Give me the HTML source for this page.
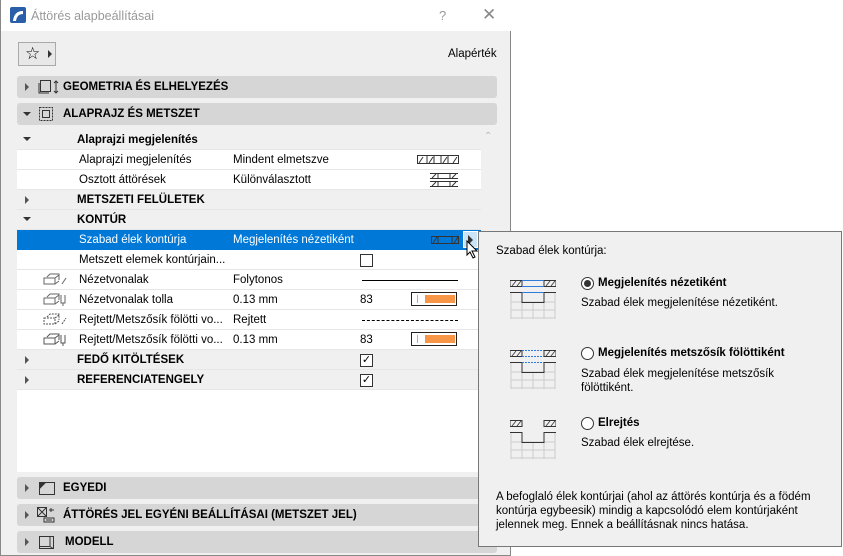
<!DOCTYPE html>
<html><head><meta charset="utf-8"><style>
*{box-sizing:border-box;margin:0;padding:0}
body{width:843px;height:556px;background:#fff;font-family:"Liberation Sans",sans-serif;font-size:11.5px;color:#000;position:relative;overflow:hidden}
.dlg{position:absolute;left:0;top:0;width:511px;height:556px;background:#f0f0f0;border:1px solid #888;border-top:none}
.title{position:absolute;left:0;top:0;width:510px;height:31px;background:#fff}
.abs{position:absolute}
.sh{position:absolute;left:16px;width:480px;height:22px;background:#d6d6d6;border-radius:3px;font-weight:bold;font-size:11.5px}
.sh span{position:absolute;top:5px}
.tri{position:absolute;width:0;height:0}
.tr{border-top:4px solid transparent;border-bottom:4px solid transparent;border-left:4px solid #555}
.td{border-left:4px solid transparent;border-right:4px solid transparent;border-top:4px solid #333}
.row{position:absolute;left:16px;width:464px;height:20px;border-bottom:1px solid #e6e6e6;background:#fff}
.row.g{background:#f0f0f0;font-weight:bold}
.row span{position:absolute;top:4px}
.cb{position:absolute;width:13px;height:13px;border:1px solid #333;background:#fff}
.pen{position:absolute;left:410px;top:2px;width:46px;height:14px;border:1px solid #222;background:#fff}
.pen i{position:absolute;left:5px;top:2px;width:1px;height:8px;background:#f5a050}
.pen b{position:absolute;left:13px;top:2px;width:30px;height:8px;background:#f79646}
.pop{position:absolute;left:478px;top:231px;width:364px;height:316px;background:#f0f0f0;border:1px solid #777}
.radio{position:absolute;width:13px;height:13px;border:1px solid #333;border-radius:50%;background:#fff}
</style></head><body>
<div class="dlg">
<div class="title">
<svg class="abs" style="left:9px;top:7px" width="16" height="16"><rect width="16" height="16" rx="2" fill="#2a5ea8"/><path d="M3 14 Q4 4 13 4 L13 7 Q7 7 6 14Z" fill="#fff"/></svg>
<span class="abs" style="left:30px;top:9px;color:#999;font-size:12.5px">Áttörés alapbeállításai</span>
<span class="abs" style="left:438px;top:8px;color:#999;font-size:13px">?</span>
<span class="abs" style="left:481px;top:5px;color:#888;font-size:17px">✕</span>
</div>
<div class="abs" style="left:17px;top:42px;width:38px;height:24px;border:1px solid #aaa;background:#e8e8e8"></div>
<span class="abs" style="left:24px;top:44px;font-size:17px">☆</span>
<div class="tri tr abs" style="left:47px;top:50px;border-left-color:#333"></div>
<span class="abs" style="left:447px;top:48px">Alapérték</span>

<div class="sh" style="top:76px"><div class="tri tr" style="left:8px;top:7px"></div>
<svg class="abs" style="left:21px;top:3px" width="22" height="16" fill="none" stroke="#333"><rect x="2.5" y="1.5" width="10" height="11"/><path d="M1 4v10h10M18 2v12M16 4l2-2 2 2M16 12l2 2 2-2"/></svg>
<span style="left:46px">GEOMETRIA ÉS ELHELYEZÉS</span></div>
<div class="sh" style="top:103px"><div class="tri td" style="left:6px;top:9px"></div>
<svg class="abs" style="left:21px;top:3px" width="16" height="16" fill="none" stroke="#333"><rect x="1.5" y="1.5" width="13" height="13" stroke-dasharray="2 1"/><rect x="4.5" y="4.5" width="7" height="7"/></svg>
<span style="left:46px">ALAPRAJZ ÉS METSZET</span></div>

<div class="abs" style="left:16px;top:130px;width:480px;height:342px;background:#fff"></div>
<div class="abs" style="left:480px;top:130px;width:16px;height:342px;background:#f0f0f0"></div>
<span class="abs" style="left:483px;top:131px;color:#bbb;font-size:10px">⌃</span>

<div class="row g" style="top:130px"><div class="tri td" style="left:6px;top:7px"></div><span style="left:60px">Alaprajzi megjelenítés</span></div>
<div class="row" style="top:150px"><span style="left:62px">Alaprajzi megjelenítés</span><span style="left:216px">Mindent elmetszve</span>
<svg class="abs" style="left:400px;top:5px" width="42" height="10" fill="none" stroke="#333"><rect x="0.5" y="0.5" width="41" height="8"/><path d="M10 1v8M17 1v8M24 1v8M31 1v8M2 8l4-6M12 8l4-6M26 8l4-6M36 8l4-6"/></svg></div>
<div class="row" style="top:170px"><span style="left:62px">Osztott áttörések</span><span style="left:216px">Különválasztott</span>
<svg class="abs" style="left:413px;top:3px" width="28" height="14" fill="none" stroke="#333"><path d="M0 .5h28M0 5.5h28M0 8.5h28M0 13.5h28M2 5l4-4M22 5l4-4M2 13l4-4M22 13l4-4M8 1v4M20 1v4M8 9v4M20 9v4"/></svg></div>
<div class="row g" style="top:190px"><div class="tri tr" style="left:8px;top:6px"></div><span style="left:60px">METSZETI FELÜLETEK</span></div>
<div class="row g" style="top:210px"><div class="tri td" style="left:6px;top:7px"></div><span style="left:60px">KONTÚR</span></div>
<div class="row" style="top:230px;background:#0078d7;color:#fff;border:none;width:464px"><span style="left:62px">Szabad élek kontúrja</span><span style="left:216px">Megjelenítés nézetiként</span>
<svg class="abs" style="left:414px;top:6px" width="28" height="8" fill="none" stroke="#333"><rect x="0.5" y="0.5" width="27" height="7"/><path d="M7 0v8M21 0v8M2 7l4-6M23 7l4-6"/></svg>
<div class="abs" style="left:446px;top:1px;width:15px;height:17px;border:1px solid #fff;background:#cce4f7"></div>
<div class="tri tr abs" style="left:451px;top:5px;border-left-color:#333;border-top-width:5px;border-bottom-width:5px;border-left-width:5px"></div></div>
<div class="row" style="top:250px"><span style="left:62px">Metszett elemek kontúrjain...</span><div class="cb" style="left:343px;top:4px"></div></div>
<div class="row" style="top:270px"><svg class="abs" style="left:26px;top:2px" width="24" height="16" fill="none" stroke="#666"><path d="M4 5l3-3h9v6M1 6h11v6H1zM12 6l4-3M12 12l4-3M19 12l4-6" /></svg><span style="left:62px">Nézetvonalak</span><span style="left:216px">Folytonos</span><div class="abs" style="left:345px;top:10px;width:96px;height:1px;background:#000"></div></div>
<div class="row" style="top:290px"><svg class="abs" style="left:26px;top:2px" width="24" height="16" fill="none" stroke="#666"><path d="M4 5l3-3h9v6M1 6h11v6H1zM12 6l4-3M12 12l4-3M18 3v8h4V3M20 11v3"/></svg><span style="left:62px">Nézetvonalak tolla</span><span style="left:216px">0.13 mm</span><span style="left:343px">83</span><div class="pen" style="left:394px"><i></i><b></b></div></div>
<div class="row" style="top:310px"><svg class="abs" style="left:26px;top:2px" width="24" height="16" fill="none" stroke="#555" stroke-dasharray="2 1"><path d="M4 5l3-3h9v6M1 6h11v6H1zM12 6l4-3M12 12l4-3M19 12l4-6"/></svg><span style="left:62px">Rejtett/Metszősík fölötti vo...</span><span style="left:216px">Rejtett</span><div class="abs" style="left:345px;top:10px;width:96px;height:0;border-top:1px dashed #000"></div></div>
<div class="row" style="top:330px"><svg class="abs" style="left:26px;top:2px" width="24" height="16" fill="none" stroke="#555"><path d="M4 5l3-3h9v6M1 6h11v6H1zM12 6l4-3M12 12l4-3M18 3v8h4V3M20 11v3"/></svg><span style="left:62px">Rejtett/Metszősík fölötti vo...</span><span style="left:216px">0.13 mm</span><span style="left:343px">83</span><div class="pen" style="left:394px"><i></i><b></b></div></div>
<div class="row g" style="top:350px"><div class="tri tr" style="left:8px;top:6px"></div><span style="left:60px">FEDŐ KITÖLTÉSEK</span><div class="cb" style="left:343px;top:4px;text-align:center;font-size:11px;line-height:11px;font-weight:normal">✓</div></div>
<div class="row g" style="top:370px"><div class="tri tr" style="left:8px;top:6px"></div><span style="left:60px">REFERENCIATENGELY</span><div class="cb" style="left:343px;top:4px;text-align:center;font-size:11px;line-height:11px;font-weight:normal">✓</div></div>

<div class="sh" style="top:477px"><div class="tri tr" style="left:8px;top:7px"></div>
<svg class="abs" style="left:22px;top:5px" width="16" height="13" fill="none" stroke="#333"><rect x="0.5" y="0.5" width="15" height="12"/><path d="M1 1h5L1 6z" fill="#333"/></svg>
<span style="left:46px">EGYEDI</span></div>
<div class="sh" style="top:504px"><div class="tri tr" style="left:8px;top:7px"></div>
<svg class="abs" style="left:20px;top:3px" width="18" height="16" fill="none" stroke="#333"><rect x="0.5" y="0.5" width="9" height="9"/><path d="M1 1l8 8M9 1l-8 8M12 3h5M14 1v4M7 11h10v4H7zM9 13h6"/></svg>
<span style="left:46px">ÁTTÖRÉS JEL EGYÉNI BEÁLLÍTÁSAI (METSZET JEL)</span></div>
<div class="sh" style="top:531px"><div class="tri tr" style="left:8px;top:7px"></div>
<svg class="abs" style="left:22px;top:3px" width="16" height="16" fill="none" stroke="#333"><path d="M0.5 2.5h14v12h-14zM11 2.5v10l3 2M0.5 12.5h10"/></svg>
<span style="left:48px">MODELL</span></div>
</div>

<div class="pop">
<span class="abs" style="left:17px;top:13px">Szabad élek kontúrja:</span>
<svg class="abs" style="left:31px;top:48px" width="46" height="40" fill="none"><g stroke="#ccc"><path d="M1 13v26M12 13v26M23 22v17M34 13v26M45 13v26M1 22h44M1 30h44M1 38h44"/></g><g stroke="#333"><path d="M0 .5h12v6H0zM34 .5h12v6H34zM0 12.5h12v10h22v-10h12"/><path d="M2 6l4-5M7 6l4-5M36 6l4-5M41 6l4-5" stroke-width=".8"/></g><path d="M12 .5h22M12 6.5h22M12 12.5h22" stroke="#2f7bd9"/></svg>
<div class="radio" style="left:102px;top:45px"><div style="position:absolute;left:2px;top:2px;width:7px;height:7px;border-radius:50%;background:#333"></div></div>
<b class="abs" style="left:119px;top:45px">Megjelenítés nézetiként</b>
<span class="abs" style="left:102px;top:65px">Szabad élek megjelenítése nézetiként.</span>
<svg class="abs" style="left:31px;top:118px" width="46" height="40" fill="none"><g stroke="#ccc"><path d="M1 13v26M12 13v26M23 22v17M34 13v26M45 13v26M1 22h44M1 30h44M1 38h44"/></g><g stroke="#333"><path d="M0 .5h12v6H0zM34 .5h12v6H34zM0 12.5h12v10h22v-10h12"/><path d="M2 6l4-5M7 6l4-5M36 6l4-5M41 6l4-5" stroke-width=".8"/></g><path d="M12 .5h22M12 6.5h22M12 12.5h22" stroke="#2f7bd9" stroke-dasharray="2 1"/></svg>
<div class="radio" style="left:102px;top:115px"></div>
<b class="abs" style="left:119px;top:115px">Megjelenítés metszősík fölöttiként</b>
<span class="abs" style="left:102px;top:135px;line-height:14px">Szabad élek megjelenítése metszősík<br>fölöttiként.</span>
<svg class="abs" style="left:31px;top:188px" width="46" height="40" fill="none"><g stroke="#ccc"><path d="M1 13v26M12 13v26M23 22v17M34 13v26M45 13v26M1 22h44M1 30h44M1 38h44"/></g><g stroke="#333"><path d="M0 .5h12v6H0zM34 .5h12v6H34zM0 12.5h12v10h22v-10h12"/><path d="M2 6l4-5M7 6l4-5M36 6l4-5M41 6l4-5" stroke-width=".8"/></g></svg>
<div class="radio" style="left:102px;top:185px"></div>
<b class="abs" style="left:119px;top:185px">Elrejtés</b>
<span class="abs" style="left:102px;top:205px">Szabad élek elrejtése.</span>
<span class="abs" style="left:17px;top:258px;line-height:14px">A befoglaló élek kontúrjai (ahol az áttörés kontúrja és a födém<br>kontúrja egybeesik) mindig a kapcsolódó elem kontúrjaként<br>jelennek meg. Ennek a beállításnak nincs hatása.</span>
</div>
<svg class="abs" style="left:466px;top:240px" width="14" height="20"><path d="M1 1v14l3-3 3 6 2-1-3-6h5z" fill="#fff" stroke="#000"/></svg>
</body></html>
